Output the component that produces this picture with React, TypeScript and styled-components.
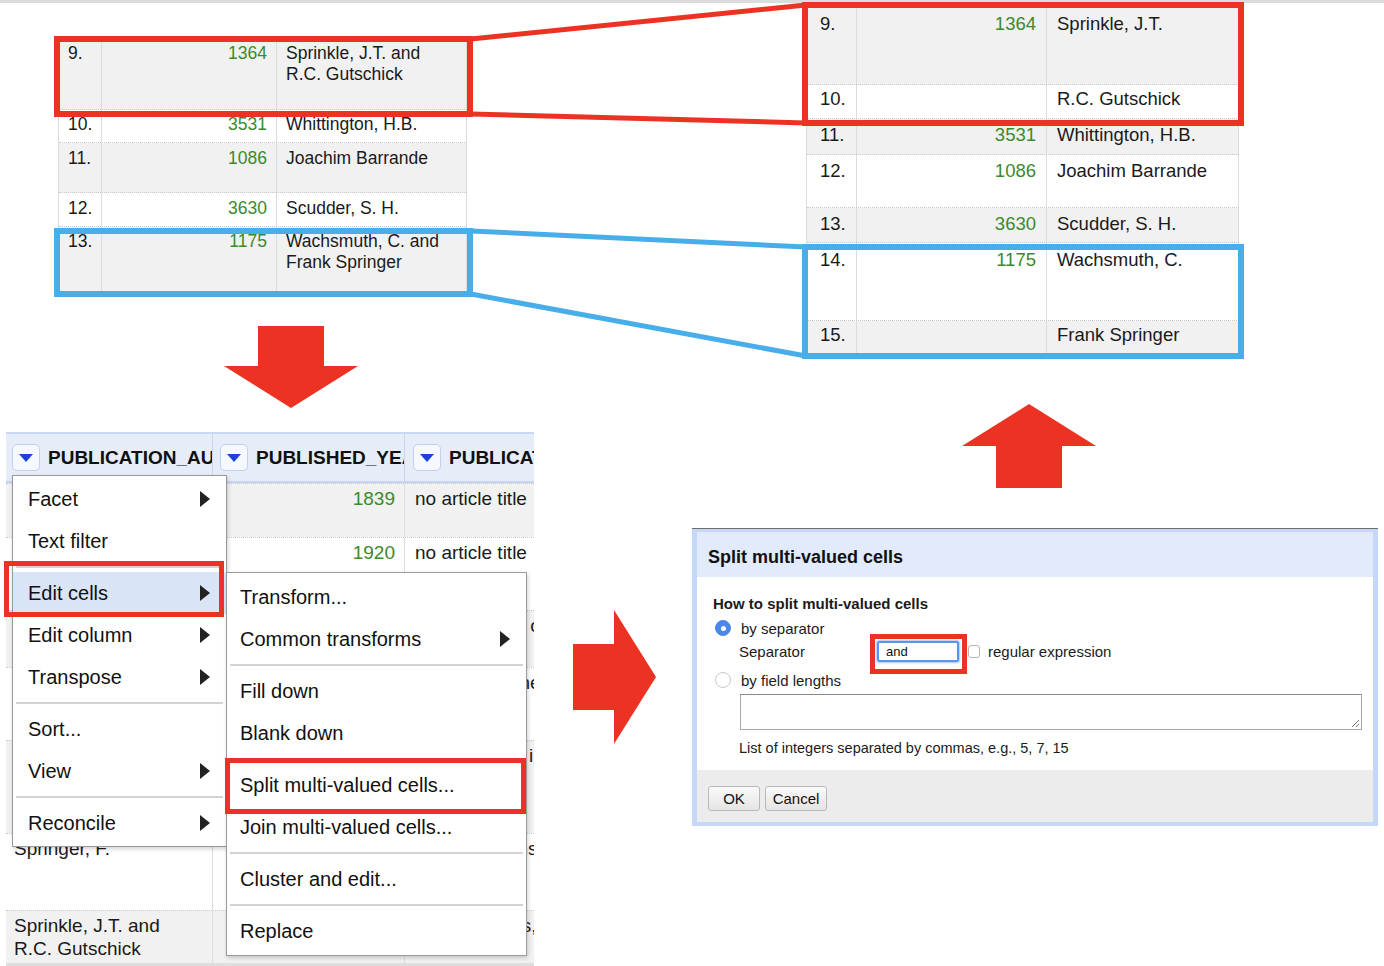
import React from "react";
import styled, { createGlobalStyle } from "styled-components";

const GlobalStyle = createGlobalStyle`
  html, body { margin: 0; padding: 0; background: #fff; }
  body { font-family: "Liberation Sans", Arial, sans-serif; color: #111; }
  * { box-sizing: border-box; }
`;

const RED = "#ec3323";
const BLUE = "#48aeea";
const GREEN = "#3b8a2c";

const Canvas = styled.div`
  position: relative;
  width: 1384px;
  height: 966px;
  overflow: hidden;
  background: #fff;
`;

const TopStrip = styled.div`
  height: 3px;
  background: #dcdcdc;
`;

/* ---------- zoomed table snippets ---------- */

const SnippetBefore = styled.div`
  position: absolute;
  left: 58px;
  top: 39px;
  display: flex;
  flex-direction: column;
  border-left: 1px solid #dcdcdc;
  font-size: 17.5px;
  line-height: 21px;
  color: #1a1a1a;
`;

const SnippetAfter = styled.div`
  position: absolute;
  left: 806px;
  top: 8px;
  display: flex;
  flex-direction: column;
  border-left: 1px solid #dcdcdc;
  font-size: 18.5px;
  line-height: 22px;
  color: #1a1a1a;
`;

const SnipRow = styled.div<{ $h: number; $shade: boolean }>`
  display: flex;
  height: ${(p) => p.$h}px;
  background: ${(p) => (p.$shade ? "#f1f1f1" : "#fff")};
  border-bottom: 1px dotted #c9c9c9;
`;

const SnipCell = styled.div<{ $w: number; $kind: "idx" | "num" | "name"; $pad: number; $top: number }>`
  flex: none;
  width: ${(p) => p.$w}px;
  padding-top: ${(p) => p.$top}px;
  padding-left: ${(p) => (p.$kind === "num" ? 0 : p.$pad)}px;
  padding-right: ${(p) => (p.$kind === "num" ? p.$pad : 0)}px;
  text-align: ${(p) => (p.$kind === "num" ? "right" : "left")};
  color: ${(p) => (p.$kind === "num" ? GREEN : "#1a1a1a")};
  border-right: 1px solid #dcdcdc;
  white-space: nowrap;
`;

type Snip = { idx: string; num?: string; name: string[]; h: number; shade: boolean; top: number };

const beforeRows: Snip[] = [
  { idx: "9.", num: "1364", name: ["Sprinkle, J.T. and", "R.C. Gutschick"], h: 71, shade: true, top: 4 },
  { idx: "10.", num: "3531", name: ["Whittington, H.B."], h: 33, shade: false, top: 4 },
  { idx: "11.", num: "1086", name: ["Joachim Barrande"], h: 50, shade: true, top: 5 },
  { idx: "12.", num: "3630", name: ["Scudder, S. H."], h: 34, shade: false, top: 5 },
  { idx: "13.", num: "1175", name: ["Wachsmuth, C. and", "Frank Springer"], h: 66, shade: true, top: 4 },
];

const afterRows: Snip[] = [
  { idx: "9.", num: "1364", name: ["Sprinkle, J.T."], h: 77, shade: true, top: 5 },
  { idx: "10.", name: ["R.C. Gutschick"], h: 34, shade: false, top: 3 },
  { idx: "11.", num: "3531", name: ["Whittington, H.B."], h: 36, shade: true, top: 5 },
  { idx: "12.", num: "1086", name: ["Joachim Barrande"], h: 53, shade: false, top: 5 },
  { idx: "13.", num: "3630", name: ["Scudder, S. H."], h: 35, shade: true, top: 5 },
  { idx: "14.", num: "1175", name: ["Wachsmuth, C."], h: 78, shade: false, top: 6 },
  { idx: "15.", name: ["Frank Springer"], h: 33, shade: true, top: 3 },
];

const Lines = ({ lines }: { lines: string[] }) => (
  <>
    {lines.map((l, i) => (
      <div key={i}>{l}</div>
    ))}
  </>
);

const SnipRows = ({
  rows,
  widths,
  pads,
}: {
  rows: Snip[];
  widths: [number, number, number];
  pads: [number, number, number];
}) => (
  <>
    {rows.map((r) => (
      <SnipRow key={r.idx} $h={r.h} $shade={r.shade}>
        <SnipCell $w={widths[0]} $kind="idx" $pad={pads[0]} $top={r.top}>
          {r.idx}
        </SnipCell>
        <SnipCell $w={widths[1]} $kind="num" $pad={pads[1]} $top={r.top}>
          {r.num ?? ""}
        </SnipCell>
        <SnipCell $w={widths[2]} $kind="name" $pad={pads[2]} $top={r.top}>
          <Lines lines={r.name} />
        </SnipCell>
      </SnipRow>
    ))}
  </>
);

/* ---------- OpenRefine panel ---------- */

const RefinePanel = styled.div`
  position: absolute;
  left: 6px;
  top: 432px;
  width: 528px;
  height: 534px;
  overflow: hidden;
  display: flex;
  flex-direction: column;
  background: #fff;
`;

const HeaderRow = styled.div`
  display: flex;
  flex: none;
  height: 51px;
  background: #e6edf9;
  border-top: 2px solid #cad8f3;
  border-bottom: 2px solid #c4d4f2;
`;

const HeaderCell = styled.div<{ $w: number; $pl: number }>`
  flex: none;
  width: ${(p) => p.$w}px;
  display: flex;
  align-items: center;
  gap: 8px;
  padding-left: ${(p) => p.$pl}px;
  border-right: 1px solid #c9d6ef;
  overflow: hidden;
  white-space: nowrap;
  font-weight: 700;
  font-size: 19px;
  color: #111;
`;

const DropButton = styled.div`
  flex: none;
  width: 28px;
  height: 27px;
  border: 1px solid #c3d0ee;
  border-radius: 5px;
  background: #f5f8fe;
  display: flex;
  align-items: center;
  justify-content: center;
`;

const DownTri = styled.div`
  width: 0;
  height: 0;
  border-left: 7px solid transparent;
  border-right: 7px solid transparent;
  border-top: 8px solid #1d40d6;
  margin-top: 1px;
`;

const DataRow = styled.div<{ $h: number; $shade: boolean }>`
  display: flex;
  flex: none;
  height: ${(p) => p.$h}px;
  background: ${(p) => (p.$shade ? "#f1f1f1" : "#fff")};
  border-top: 1px dotted #c9c9c9;
  font-size: 19px;
  line-height: 23px;
`;

const DataCell = styled.div<{ $w: number; $kind: "text" | "num" }>`
  flex: none;
  width: ${(p) => p.$w}px;
  padding: 3px ${(p) => (p.$kind === "num" ? "9px" : "0")} 0 ${(p) => (p.$kind === "num" ? "0" : "8px")};
  text-align: ${(p) => (p.$kind === "num" ? "right" : "left")};
  color: ${(p) => (p.$kind === "num" ? GREEN : "#1a1a1a")};
  border-right: 1px solid #dedede;
  white-space: nowrap;
  overflow: hidden;
`;

const WideCell = styled(DataCell)`
  padding-left: 10px;
  border-right: none;
`;

const BottomStrip = styled.div`
  flex: 1;
  background: #dedede;
`;

type DRow = { h: number; shade: boolean; a: string[]; y: string; t: string };
const dataRows: DRow[] = [
  { h: 54, shade: true, a: ["Murchison, R.I."], y: "1839", t: "no article title" },
  { h: 73, shade: false, a: ["Hall, James"], y: "1920", t: "no article title" },
  { h: 57, shade: true, a: ["Walcott, C.D."], y: "1885", t: "Paleontology of thre" },
  { h: 73, shade: false, a: ["Ulrich, E.O."], y: "1911", t: "Revision of the Paler" },
  { h: 93, shade: true, a: ["Bassler, R.S."], y: "1915", t: "Bibliographic indexep" },
  { h: 77, shade: false, a: ["Springer, F."], y: "1926", t: "Unusual forms of fosts" },
  { h: 53, shade: true, a: ["Sprinkle, J.T. and", "R.C. Gutschick"], y: "1967", t: "Costatocrinus, a new ip" },
];

const MenuPanel = styled.div`
  position: absolute;
  background: #fff;
  border: 1px solid #9a9a9a;
  box-shadow: 1px 2px 4px rgba(0, 0, 0, 0.18);
  display: flex;
  flex-direction: column;
  font-size: 20px;
  color: #111;
`;

const ColumnMenu = styled(MenuPanel)`
  left: 6px;
  top: 43px;
  width: 215px;
  height: 372px;
  padding-top: 2px;
`;

const CellsMenu = styled(MenuPanel)`
  left: 220px;
  top: 140px;
  width: 301px;
  height: 384px;
  padding-top: 3px;
`;

const MenuItem = styled.div<{ $active?: boolean; $pl: number }>`
  flex: none;
  height: 42px;
  display: flex;
  align-items: center;
  justify-content: space-between;
  padding: 0 16px 0 ${(p) => p.$pl}px;
  background: ${(p) => (p.$active ? "#d9e4f6" : "transparent")};
  white-space: nowrap;
`;

const SubArrow = styled.span`
  width: 0;
  height: 0;
  border-top: 8px solid transparent;
  border-bottom: 8px solid transparent;
  border-left: 10px solid #222;
`;

const MenuSep = styled.div`
  flex: none;
  height: 2px;
  margin: 4px 3px;
  background: #d2d2d2;
`;

type MI = { label: string; sub?: boolean; active?: boolean } | "sep";

const colMenu: MI[] = [
  { label: "Facet", sub: true },
  { label: "Text filter" },
  "sep",
  { label: "Edit cells", sub: true, active: true },
  { label: "Edit column", sub: true },
  { label: "Transpose", sub: true },
  "sep",
  { label: "Sort..." },
  { label: "View", sub: true },
  "sep",
  { label: "Reconcile", sub: true },
];

const cellMenu: MI[] = [
  { label: "Transform..." },
  { label: "Common transforms", sub: true },
  "sep",
  { label: "Fill down" },
  { label: "Blank down" },
  "sep",
  { label: "Split multi-valued cells..." },
  { label: "Join multi-valued cells..." },
  "sep",
  { label: "Cluster and edit..." },
  "sep",
  { label: "Replace" },
];

const MenuItems = ({ items, pl }: { items: MI[]; pl: number }) => (
  <>
    {items.map((it, i) =>
      it === "sep" ? (
        <MenuSep key={i} />
      ) : (
        <MenuItem key={i} $active={it.active} $pl={pl}>
          <span>{it.label}</span>
          {it.sub && <SubArrow />}
        </MenuItem>
      )
    )}
  </>
);

/* ---------- dialog ---------- */

const SplitDialog = styled.div`
  position: absolute;
  left: 692px;
  top: 528px;
  width: 686px;
  height: 298px;
  border-top: 1px solid #6e6e6e;
  background: #c6d8f7;
  padding: 3px 5px 4px 5px;
  display: flex;
  flex-direction: column;
  color: #1b1b1b;
`;

const DialogHeader = styled.div`
  flex: none;
  height: 45px;
  background: #e1ebfc;
  display: flex;
  align-items: center;
  padding: 6px 0 0 11px;
  font-weight: 700;
  font-size: 18px;
  color: #111;
`;

const DialogBody = styled.div`
  flex: none;
  height: 193px;
  background: #fff;
  padding: 18px 16px 0 16px;
  display: flex;
  flex-direction: column;
  font-size: 15px;
`;

const BodyTitle = styled.div`
  font-weight: 700;
  font-size: 15px;
  line-height: 18px;
  margin-bottom: 3px;
`;

const OptionRow = styled.div<{ $indent?: boolean; $gap?: number }>`
  display: flex;
  align-items: center;
  height: ${(p) => (p.$indent ? 23 : 24)}px;
  margin-top: ${(p) => p.$gap ?? 0}px;
  padding-left: ${(p) => (p.$indent ? 26 : 2)}px;
`;

const Radio = styled.span<{ $on?: boolean }>`
  flex: none;
  width: 16px;
  height: 16px;
  border-radius: 50%;
  margin-right: 10px;
  background: ${(p) => (p.$on ? "#4b87e9" : "#fff")};
  border: 1px solid ${(p) => (p.$on ? "#4b87e9" : "#c8c8c8")};
  display: flex;
  align-items: center;
  justify-content: center;
  &::after {
    content: "";
    display: ${(p) => (p.$on ? "block" : "none")};
    width: 5px;
    height: 5px;
    border-radius: 50%;
    background: #fff;
  }
`;

const FieldLabel = styled.span`
  width: 138px;
  flex: none;
`;

const SepInput = styled.div`
  flex: none;
  width: 82px;
  height: 21px;
  border: 2px solid #5a94ec;
  border-radius: 2px;
  box-shadow: 0 0 2px 1px #a9c6f5;
  font-size: 13px;
  line-height: 17px;
  padding-left: 7px;
  margin-right: 9px;
  color: #111;
`;

const CheckBox = styled.span`
  flex: none;
  width: 12px;
  height: 13px;
  border: 1px solid #b4b4b4;
  border-radius: 3px;
  margin-right: 8px;
`;

const LengthsArea = styled.div`
  position: relative;
  margin: 2px 0 0 27px;
  width: 622px;
  height: 36px;
  border: 1px solid #a8a8a8;
  border-top-color: #8a8a8a;
`;

const ResizeGrip = styled.svg`
  position: absolute;
  right: 1px;
  bottom: 1px;
`;

const HelpText = styled.div`
  margin: 9px 0 0 26px;
  font-size: 14.5px;
  line-height: 18px;
`;

const DialogFooter = styled.div`
  flex: 1;
  background: #ececec;
  display: flex;
  align-items: flex-start;
  gap: 5px;
  padding: 16px 0 0 11px;
`;

const DlgButton = styled.div<{ $w: number }>`
  width: ${(p) => p.$w}px;
  height: 25px;
  border: 1px solid #b9b9b9;
  border-radius: 3px;
  background: linear-gradient(#fafafa, #e4e4e4);
  font-size: 15px;
  display: flex;
  align-items: center;
  justify-content: center;
  color: #111;
`;

/* ---------- annotations ---------- */

const Callout = styled.div<{ $x: number; $y: number; $w: number; $h: number; $c: string; $b: number }>`
  position: absolute;
  left: ${(p) => p.$x}px;
  top: ${(p) => p.$y}px;
  width: ${(p) => p.$w}px;
  height: ${(p) => p.$h}px;
  border: ${(p) => p.$b}px solid ${(p) => p.$c};
  pointer-events: none;
`;

const Overlay = styled.svg`
  position: absolute;
  left: 0;
  top: 0;
  pointer-events: none;
`;

export default function App() {
  return (
    <>
      <GlobalStyle />
      <Canvas>
        <TopStrip />

        <SnippetBefore>
          <SnipRows rows={beforeRows} widths={[43, 175, 190]} pads={[9, 9, 9]} />
        </SnippetBefore>

        <SnippetAfter>
          <SnipRows rows={afterRows} widths={[50, 190, 192]} pads={[13, 10, 10]} />
        </SnippetAfter>

        <RefinePanel>
          <HeaderRow>
            <HeaderCell $w={207} $pl={6}>
              <DropButton>
                <DownTri />
              </DropButton>
              PUBLICATION_AUTHOR
            </HeaderCell>
            <HeaderCell $w={192} $pl={7}>
              <DropButton>
                <DownTri />
              </DropButton>
              PUBLISHED_YEAR
            </HeaderCell>
            <HeaderCell $w={200} $pl={8}>
              <DropButton>
                <DownTri />
              </DropButton>
              PUBLICATION_TITLE
            </HeaderCell>
          </HeaderRow>
          {dataRows.map((r, i) => (
            <DataRow key={i} $h={r.h} $shade={r.shade}>
              <DataCell $w={207} $kind="text">
                <Lines lines={r.a} />
              </DataCell>
              <DataCell $w={192} $kind="num">
                {r.y}
              </DataCell>
              <WideCell $w={200} $kind="text">
                {r.t}
              </WideCell>
            </DataRow>
          ))}
          <BottomStrip />

          <ColumnMenu>
            <MenuItems items={colMenu} pl={15} />
          </ColumnMenu>
          <CellsMenu>
            <MenuItems items={cellMenu} pl={13} />
          </CellsMenu>
        </RefinePanel>

        <SplitDialog>
          <DialogHeader>Split multi-valued cells</DialogHeader>
          <DialogBody>
            <BodyTitle>How to split multi-valued cells</BodyTitle>
            <OptionRow>
              <Radio $on />
              by separator
            </OptionRow>
            <OptionRow $indent>
              <FieldLabel>Separator</FieldLabel>
              <SepInput>and</SepInput>
              <CheckBox />
              regular expression
            </OptionRow>
            <OptionRow $gap={5}>
              <Radio />
              by field lengths
            </OptionRow>
            <LengthsArea>
              <ResizeGrip width="10" height="10" viewBox="0 0 10 10">
                <path d="M9 2 L2 9 M9 6 L6 9" stroke="#777" strokeWidth="1" />
              </ResizeGrip>
            </LengthsArea>
            <HelpText>List of integers separated by commas, e.g., 5, 7, 15</HelpText>
          </DialogBody>
          <DialogFooter>
            <DlgButton $w={52}>OK</DlgButton>
            <DlgButton $w={62}>Cancel</DlgButton>
          </DialogFooter>
        </SplitDialog>

        <Callout $x={54} $y={36} $w={419} $h={81} $c={RED} $b={6} />
        <Callout $x={54} $y={228} $w={419} $h={69} $c={BLUE} $b={6} />
        <Callout $x={802} $y={2} $w={442} $h={124} $c={RED} $b={6} />
        <Callout $x={802} $y={244} $w={442} $h={115} $c={BLUE} $b={6} />
        <Callout $x={4} $y={561} $w={220} $h={56} $c={RED} $b={5} />
        <Callout $x={225} $y={758} $w={301} $h={56} $c={RED} $b={5} />
        <Callout $x={870} $y={634} $w={97} $h={40} $c={RED} $b={5} />

        <Overlay width="1384" height="966" viewBox="0 0 1384 966">
          <line x1="471" y1="39" x2="806" y2="5" stroke={RED} strokeWidth="5" />
          <line x1="471" y1="114" x2="806" y2="123" stroke={RED} strokeWidth="5" />
          <line x1="471" y1="231" x2="806" y2="247" stroke={BLUE} strokeWidth="5" />
          <line x1="471" y1="294" x2="806" y2="356" stroke={BLUE} strokeWidth="5" />
          <polygon points="258,326 324,326 324,366 358,366 291,408 224,366 258,366" fill={RED} />
          <polygon points="573,644 614,644 614,610 656,677 614,744 614,710 573,710" fill={RED} />
          <polygon points="1029,404 1096,446 1062,446 1062,488 996,488 996,446 962,446" fill={RED} />
        </Overlay>
      </Canvas>
    </>
  );
}
